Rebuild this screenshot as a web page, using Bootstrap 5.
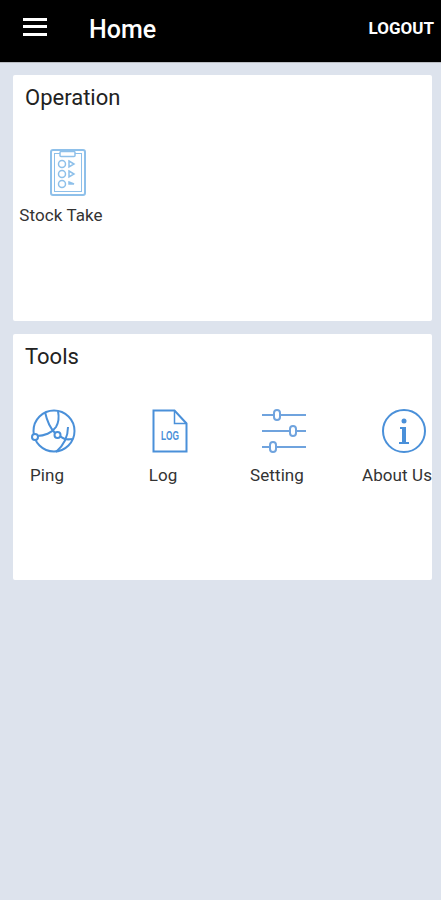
<!DOCTYPE html>
<html lang="en">
<head>
  <meta charset="UTF-8" />
  <meta name="viewport" content="width=device-width, initial-scale=1.0"/>
  <title>Home</title>
  <link href="https://cdn.jsdelivr.net/npm/bootstrap@5.3.3/dist/css/bootstrap.min.css" rel="stylesheet">
  <style>
    body {
      background: #dde3ed;
      font-family: Roboto, "Liberation Sans", sans-serif;
      min-height: 900px;
      color: #333;
    }
    .app-bar {
      height: 63px;
      background: #000;
      border-bottom: 1px solid #b9bcc2;
      color: #fff;
      padding: 0 7px 0 23px;
    }
    .burger {
      width: 24px;
      height: 18px;
      margin-top: -9px;
      margin-right: 42px;
      background: linear-gradient(#fff 0 3px, transparent 3px 7.5px, #fff 7.5px 10.5px, transparent 10.5px 15px, #fff 15px 18px);
    }
    .bar-title {
      font-size: 25px;
      font-weight: 500;
      margin-top: -3px;
    }
    .bar-action {
      font-size: 17px;
      font-weight: 700;
      margin-top: -5px;
    }
    .panel {
      background: #fff;
      height: 246px;
      margin: 13px 9px 0 13px;
      border-radius: 2px;
    }
    .app-bar + .panel {
      margin-top: 12px;
    }
    .panel-title {
      font-size: 22px;
      font-weight: 400;
      line-height: 25px;
      padding: 10px 0 0 12px;
      margin: 0;
      color: #222;
    }
    .tile-row {
      display: grid;
      grid-template-columns: 68px 116px 114px 120px;
      margin-top: 40px;
    }
    .tile {
      justify-self: end;
      width: 68px;
      text-align: center;
      font-size: 17px;
      line-height: 20px;
      white-space: nowrap;
    }
    .tile svg {
      display: block;
      margin: 0 auto 12px;
      position: relative;
      left: 7px;
      overflow: visible;
    }
    .tile-label {
      display: block;
      margin: 0 -12px;
      letter-spacing: .1px;
    }
    .op-row {
      grid-template-columns: 90px;
      margin-top: 39px;
    }
    .op-row .tile {
      width: 84px;
    }
    .op-row svg {
      margin-bottom: 9px;
    }
    .ico {
      fill: none;
      stroke: #4a90d9;
      stroke-width: 2;
    }
    .ico-slider {
      fill: none;
      stroke: #6fa3de;
      stroke-width: 2;
    }
    .ico-light {
      fill: none;
      stroke: #8ec0ea;
      stroke-width: 2;
    }
    .ico-text {
      font-family: "Liberation Sans", sans-serif;
      font-weight: 700;
      font-size: 12px;
      fill: #4a90d9;
    }
  </style>
</head>
<body>
  <!-- Barre du haut -->
  <header class="app-bar d-flex align-items-center">
    <div class="burger"></div>
    <div class="bar-title flex-grow-1">Home</div>
    <div class="bar-action">LOGOUT</div>
  </header>

  <!-- Operation -->
  <section class="panel">
    <h2 class="panel-title">Operation</h2>
    <div class="tile-row op-row">
      <div class="tile">
        <svg width="36" height="47" viewBox="0 0 36 47" class="ico-light">
          <rect x="1" y="1" width="34" height="45" rx="2"/>
          <rect x="4.5" y="4.5" width="27" height="38" stroke-width="1"/>
          <rect x="10" y="2.500" width="15" height="5" rx="1" fill="#fff" stroke-width="1.500"/>
          <g stroke-width="1.500">
            <circle cx="12" cy="15" r="3.500"/><path d="M19 12l5 3-5 3z"/>
            <circle cx="12" cy="25" r="3.500"/><path d="M19 22l5 3-5 3z"/>
            <circle cx="12" cy="35" r="3.500"/><path d="M19 33l5 2h-5z"/>
          </g>
        </svg>
        <span class="tile-label">Stock Take</span>
      </div>
    </div>
  </section>

  <!-- Tools -->
  <section class="panel">
    <h2 class="panel-title">Tools</h2>
    <div class="tile-row">
      <div class="tile">
        <svg width="44" height="44" viewBox="0 0 44 44" class="ico">
          <circle cx="22" cy="22" r="20.5"/>
          <path d="M5 27C12 27 20 24 24 18 27 13 27 7 26 2"/>
          <path d="M13 3C15 12 18 19 23 24"/>
          <path d="M36 18C36 28 32 36 24 43"/>
          <path d="M28 27C31 30 35 31 40 30"/>
          <circle cx="3" cy="28" r="3" fill="#fff"/>
          <circle cx="25.500" cy="26" r="3" fill="#fff"/>
        </svg>
        <span class="tile-label">Ping</span>
      </div>
      <div class="tile">
        <svg width="36" height="44" viewBox="0 0 36 44" class="ico">
          <path d="M1.500 1.500h21l12 13v28h-33z"/>
          <path d="M22.500 1.500v13h12" stroke-width="1.500"/>
          <text x="9" y="31" class="ico-text" stroke="none" textLength="18" lengthAdjust="spacingAndGlyphs">LOG</text>
        </svg>
        <span class="tile-label">Log</span>
      </div>
      <div class="tile">
        <svg width="44" height="44" viewBox="0 0 44 44" class="ico-slider">
          <path d="M0 6h11M19 6h25M0 22h27M35 22h9M0 38h7M15 38h29"/>
          <rect x="12" y="1" width="6" height="10" rx="3"/>
          <rect x="28" y="17" width="6" height="10" rx="3"/>
          <rect x="8" y="33" width="6" height="10" rx="3"/>
        </svg>
        <span class="tile-label">Setting</span>
      </div>
      <div class="tile">
        <svg width="44" height="44" viewBox="0 0 44 44" class="ico">
          <circle cx="22" cy="22" r="21"/>
          <circle cx="22" cy="12" r="2.500" fill="#4a90d9" stroke="none"/>
          <path d="M18 18h6v15h3v2H17v-2h3V20h-2z" fill="#4a90d9" stroke="none"/>
        </svg>
        <span class="tile-label">About Us</span>
      </div>
    </div>
  </section>

  <script src="https://cdn.jsdelivr.net/npm/bootstrap@5.3.3/dist/js/bootstrap.bundle.min.js"></script>
</body>
</html>
